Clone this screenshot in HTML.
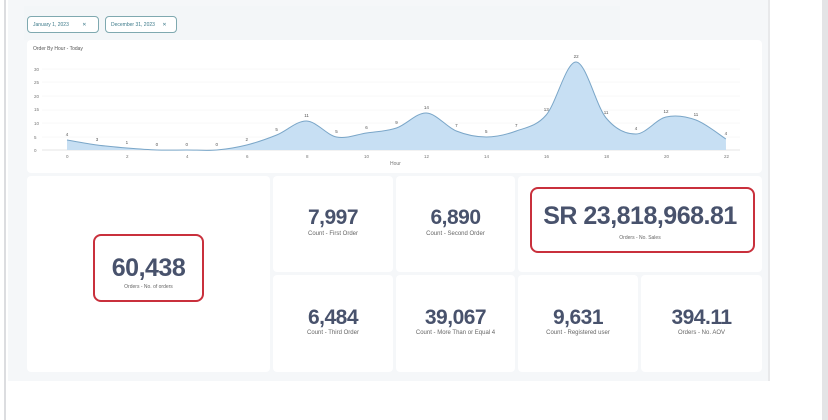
<!DOCTYPE html>
<html><head><style>
*{margin:0;padding:0;box-sizing:border-box}
body{width:828px;height:420px;background:#fff;font-family:"Liberation Sans",sans-serif;position:relative;overflow:hidden}
.frame{position:absolute;left:8px;top:0;width:760px;height:381px;background:#f5f7f9}
.lb{position:absolute;left:4px;top:0;width:2px;height:420px;background:#dcdde0}
.rb{position:absolute;left:822px;top:0;width:6px;height:420px;background:#e4e4e6}
.rb2{position:absolute;left:768px;top:0;width:2px;height:381px;background:#e8e9eb}
.card{position:absolute;background:#fff;border-radius:4px}
.num{position:absolute;left:0;right:0;text-align:center;color:#48526c;font-weight:bold;letter-spacing:-0.5px}
.lab{position:absolute;left:0;right:0;text-align:center;color:#666;font-size:6px}
.date{position:absolute;top:16px;height:17px;border:1.5px solid #7fa9b0;border-radius:4px;font-size:5px;color:#3d7a8a;padding:5px 0 0 5px;background:#fff}
.red{position:absolute;border:2.5px solid #c9303c;border-radius:8px}
.yl{position:absolute;left:34px;font-size:4.5px;color:#777}
.xl{position:absolute;top:154px;font-size:4.5px;color:#777}
</style></head><body>
<div class="lb"></div><div class="rb"></div>
<div class="frame"></div><div class="rb2"></div>
<div style="position:absolute;left:24px;top:6px;width:596px;height:34px;background:#f3f6f8"></div>
<div class="date" style="left:27px;width:72px">January 1, 2023 <span style="margin-left:12px">✕</span></div>
<div class="date" style="left:105px;width:72px">December 31, 2023 <span style="margin-left:6px">✕</span></div>
<div class="card" style="left:27px;top:40px;width:735px;height:133px"></div>
<div style="position:absolute;left:33px;top:46px;font-size:5px;color:#555">Order By Hour - Today</div>
<div style="position:absolute;left:390px;top:161px;font-size:5px;color:#777">Hour</div>
<svg style="position:absolute;left:0;top:0" width="828" height="180" id="ch"></svg>
<div class="card" style="left:27px;top:176px;width:243px;height:196px"></div>
<div class="card" style="left:273px;top:176px;width:120px;height:96px"></div>
<div class="card" style="left:396px;top:176px;width:119px;height:96px"></div>
<div class="card" style="left:518px;top:176px;width:244px;height:96px"></div>
<div class="card" style="left:273px;top:275px;width:120px;height:97px"></div>
<div class="card" style="left:396px;top:275px;width:119px;height:97px"></div>
<div class="card" style="left:518px;top:275px;width:120px;height:97px"></div>
<div class="card" style="left:641px;top:275px;width:121px;height:97px"></div>

<div class="red" style="left:93px;top:234px;width:111px;height:68px"></div>
<div class="num" style="left:27px;width:243px;top:254px;font-size:25px">60,438</div>
<div class="lab" style="left:27px;width:243px;top:284px;font-size:5px">Orders - No. of orders</div>

<div class="num" style="left:273px;width:120px;top:206px;font-size:21px">7,997</div>
<div class="lab" style="left:273px;width:120px;top:231px">Count - First Order</div>
<div class="num" style="left:396px;width:119px;top:206px;font-size:21px">6,890</div>
<div class="lab" style="left:396px;width:119px;top:231px">Count - Second Order</div>
<div class="red" style="left:530px;top:187px;width:225px;height:66px"></div>
<div class="num" style="left:518px;width:244px;top:202px;font-size:25px">SR 23,818,968.81</div>
<div class="lab" style="left:518px;width:244px;top:235px;font-size:5px">Orders - No. Sales</div>

<div class="num" style="left:273px;width:120px;top:306px;font-size:21px">6,484</div>
<div class="lab" style="left:273px;width:120px;top:330px">Count - Third Order</div>
<div class="num" style="left:396px;width:119px;top:306px;font-size:21px">39,067</div>
<div class="lab" style="left:396px;width:119px;top:330px">Count - More Than or Equal 4</div>
<div class="num" style="left:518px;width:120px;top:306px;font-size:21px">9,631</div>
<div class="lab" style="left:518px;width:120px;top:330px">Count - Registered user</div>
<div class="num" style="left:641px;width:121px;top:306px;font-size:21px">394.11</div>
<div class="lab" style="left:641px;width:121px;top:330px">Orders - No. AOV</div>

<div class="yl" style="top:67px">30</div><div class="yl" style="top:80px">25</div><div class="yl" style="top:94px">20</div><div class="yl" style="top:107px">15</div><div class="yl" style="top:121px">10</div><div class="yl" style="top:135px">5</div><div class="yl" style="top:148px">0</div>
<div class="xl" style="left:66px">0</div><div class="xl" style="left:126px">2</div><div class="xl" style="left:186px">4</div><div class="xl" style="left:246px">6</div><div class="xl" style="left:306px">8</div><div class="xl" style="left:364px">10</div><div class="xl" style="left:424px">12</div><div class="xl" style="left:484px">14</div><div class="xl" style="left:544px">16</div><div class="xl" style="left:604px">18</div><div class="xl" style="left:664px">20</div><div class="xl" style="left:724px">22</div>
<script>
var v=[4,3,1,0,0,0,2,5,11,5,6,9,14,7,5,7,13,22,11,4,12,11,4];
var y=[140,145,148,150,150,150,145,135,121,137,133,128,113,131,137,131,115,62,118,134,117,120,139];
var p=v.map(function(_,i){return [67+i*29.95,y[i]]});
var d="M"+p[0][0]+","+p[0][1];
for(var i=0;i<p.length-1;i++){var a=p[i-1]||p[i],b=p[i],c=p[i+1],e=p[i+2]||c;
d+=" C"+(b[0]+(c[0]-a[0])/6)+","+(b[1]+(c[1]-a[1])/6)+" "+(c[0]-(e[0]-b[0])/6)+","+(c[1]-(e[1]-b[1])/6)+" "+c[0]+","+c[1];}
var s='';
[69,82,96,110,123,137].forEach(function(g){s+='<line x1="42" x2="740" y1="'+g+'" y2="'+g+'" stroke="#f0f0f0" stroke-width="0.5"/>'});
s+='<line x1="42" x2="740" y1="150" y2="150" stroke="#ccc" stroke-width="0.6"/>';
s+='<path d="'+d+' L726,150 L67,150 Z" fill="#c7dff3"/><path d="'+d+'" fill="none" stroke="#7aa6c8" stroke-width="1"/>';
p.forEach(function(q,i){s+='<text x="'+q[0]+'" y="'+(q[1]-4)+'" font-size="4.5" fill="#555" text-anchor="middle" font-family="Liberation Sans">'+v[i]+'</text>'});
document.getElementById('ch').innerHTML=s;
</script>
</body></html>
